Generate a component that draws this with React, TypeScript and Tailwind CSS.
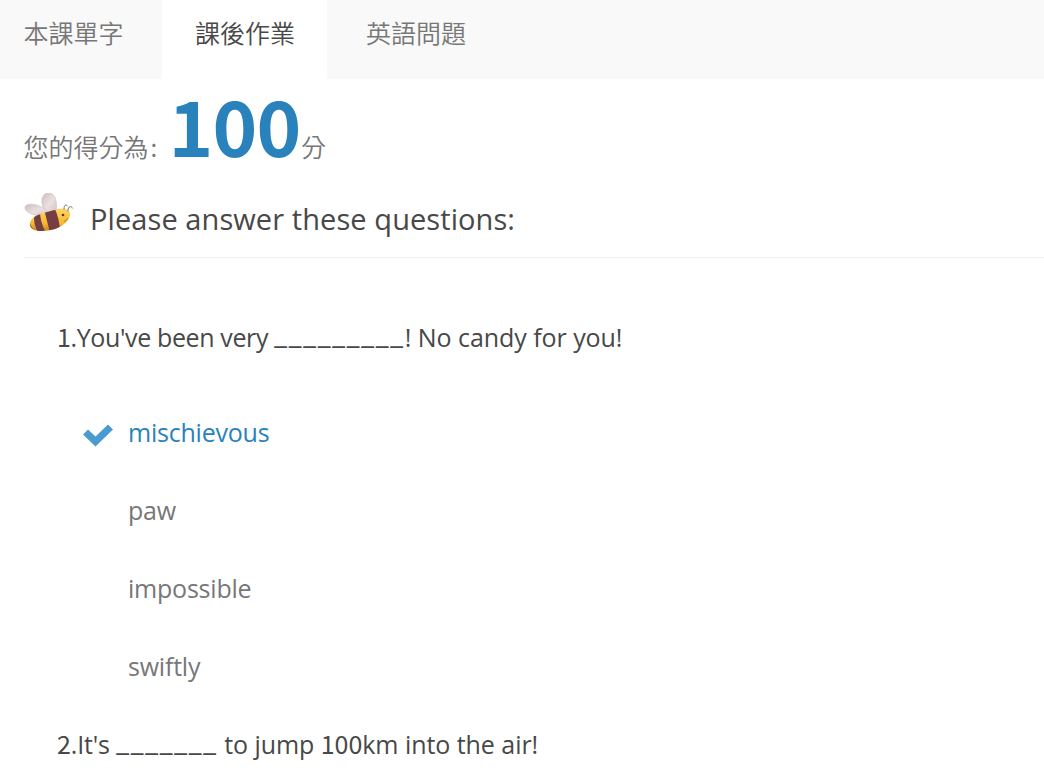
import { clsx } from "clsx";

interface Question {
    id: number;
    before: string;
    blank: string;
    after: string;
    options: string[];
    answer?: string;
    tracking?: string;
}

const tabs = [
    { label: "本課單字", className: "w-[162px] pl-[23.5px]" },
    { label: "課後作業", className: "w-[165px] pl-[33px]" },
    { label: "英語問題", className: "w-[164px] pl-[39px]" },
];

const questions: Question[] = [
    {
        id: 1,
        before: "You've been very",
        blank: "_________",
        after: "! No candy for you!",
        options: ["mischievous", "paw", "impossible", "swiftly"],
        answer: "mischievous",
        tracking: "tracking-[-0.37px]",
    },
    {
        id: 2,
        before: "It's",
        blank: "_______",
        after: " to jump 100km into the air!",
        options: [],
        tracking: "tracking-[-0.15px]",
    },
];

function Bee() {
    return (
        <svg viewBox="0 0 50 40" className="mb-[11px] h-10 w-[50px] shrink-0">
            <defs>
                <linearGradient id="wing" x1="0" y1="0" x2="1" y2="1">
                    <stop offset="0" stopColor="#cbbcbe" />
                    <stop offset="0.5" stopColor="#ebe0e1" />
                    <stop offset="1" stopColor="#d3c1c4" />
                </linearGradient>
                <linearGradient id="stripe" x1="0" y1="0" x2="0" y2="1">
                    <stop offset="0.2" stopColor="#ffd057" />
                    <stop offset="0.65" stopColor="#f8b82f" />
                    <stop offset="1" stopColor="#b87521" />
                </linearGradient>
                <clipPath id="body">
                    <path d="M6 31C6 27 10 23 17 21C23 19 29 17 35 16C42 15 46.500 17 46 22C45 28 39 33 31 36C20 39 6 39.500 6 31Z" />
                </clipPath>
            </defs>
            <path d="M23 21C16 13 16 1 24 0C33 0 33 11 32 20Z" fill="url(#wing)" stroke="#d0c2c4" strokeWidth="0.7" />
            <path d="M25 23C13 24 0 20 1 14C3 8 20 12 26 21Z" fill="url(#wing)" stroke="#d0c2c4" strokeWidth="0.7" />
            <g clipPath="url(#body)">
                <path d="M0 13H50V40H0Z" fill="url(#stripe)" />
                <path d="M10 20Q9 31 14 40H22Q16 29 16 18Z" fill="#743e42" />
                <path d="M20 16Q23 28 26 40H36Q36 26 30 14Z" fill="#743e42" />
                <path d="M5 27Q7 35 12 39H0V27Z" fill="#9b5a35" />
            </g>
            <path d="M40 16C40 12 42 11 43.500 13M44 18C43.500 14 47 12 48.500 15" fill="none" stroke="#77706c" strokeWidth="1" strokeLinecap="round" />
            <circle cx="39" cy="22" r="1.300" fill="#503734" />
            <path d="M40 28.500Q43 28 44 25" fill="none" stroke="#aa6825" strokeWidth="0.700" />
        </svg>
    );
}

function Check() {
    return (
        <svg viewBox="0 0 30 23" className="h-[23px] w-[30px]">
            <path d="M0 10.500L5 5.500L12.500 12.500L25 0.500L30 5.500L12.500 22.500Z" fill="#4a9bd0" />
        </svg>
    );
}

// Digits use the CJK face, whose "1" has a foot
function Text({ children }: { children: string }) {
    return children.split(/(\d+)/).map((part, index) =>
        index % 2 ? (
            <span key={index} className="font-['Noto_Sans_CJK_TC',sans-serif]">
                {part}
            </span>
        ) : (
            part
        ),
    );
}

function QuestionItem({ question }: { question: Question }) {
    return (
        <li>
            <p className="h-[39px] whitespace-pre pl-[57px] text-[25px] leading-[35px] text-[#484848]">
                <span className={question.tracking}>
                    <Text>{`${question.id}.${question.before} `}</Text>
                </span>
                <span className="align-[3px] text-[29px] leading-none tracking-[1.8px]">{question.blank}</span>
                <span className="tracking-[-0.05px]">
                    <Text>{question.after}</Text>
                </span>
            </p>
            <ul className="mt-14">
                {question.options.map((option) => {
                    const selected = option === question.answer;
                    return (
                        <li key={option} className="mb-[39px] flex h-[39px] items-center pl-[83px]">
                            <span className="w-[45px] pt-1.5">{selected && <Check />}</span>
                            <span
                                className={clsx(
                                    "text-[25px] leading-[39px] tracking-[-0.22px]",
                                    selected ? "text-[#2a82bd]" : "text-[#777777]",
                                )}
                            >
                                {option}
                            </span>
                        </li>
                    );
                })}
            </ul>
        </li>
    );
}

export default function App() {
    return (
        <main className="h-[774px] overflow-hidden bg-white font-['Open_Sans','Noto_Sans_CJK_TC',sans-serif]">
            <nav className="flex h-[79px] bg-[#f9f9f9]">
                {tabs.map((tab, index) => (
                    <button
                        key={tab.label}
                        className={clsx(
                            "pb-3.5 text-left font-['Noto_Sans_CJK_TC',sans-serif] text-[25px] font-[350]",
                            tab.className,
                            index === 1 ? "bg-white text-[#484848]" : "text-[#777777]",
                        )}
                    >
                        {tab.label}
                    </button>
                ))}
            </nav>
            <p className="flex h-[105px] items-baseline pl-[23.5px] font-['Noto_Sans_CJK_TC',sans-serif] text-[25px] font-[350] leading-[90px] text-[#777777]">
                <span className="w-[145px]">
                    您的得分為<span className="ml-0.5">:</span>
                </span>
                <strong className="w-[132.5px] text-[76px] font-bold tracking-[-0.8px] text-[#2a82bd]">100</strong>
                <span>分</span>
            </p>
            <h1 className="ml-6 flex h-[74px] items-center border-b border-[#f1f1f1] pb-1 text-[29px] text-[#484848]">
                <Bee />
                <span className="ml-4 tracking-[0.08px]">Please answer these questions:</span>
            </h1>
            <ol className="pt-[60px]">
                {questions.map((question) => (
                    <QuestionItem key={question.id} question={question} />
                ))}
            </ol>
        </main>
    );
}
